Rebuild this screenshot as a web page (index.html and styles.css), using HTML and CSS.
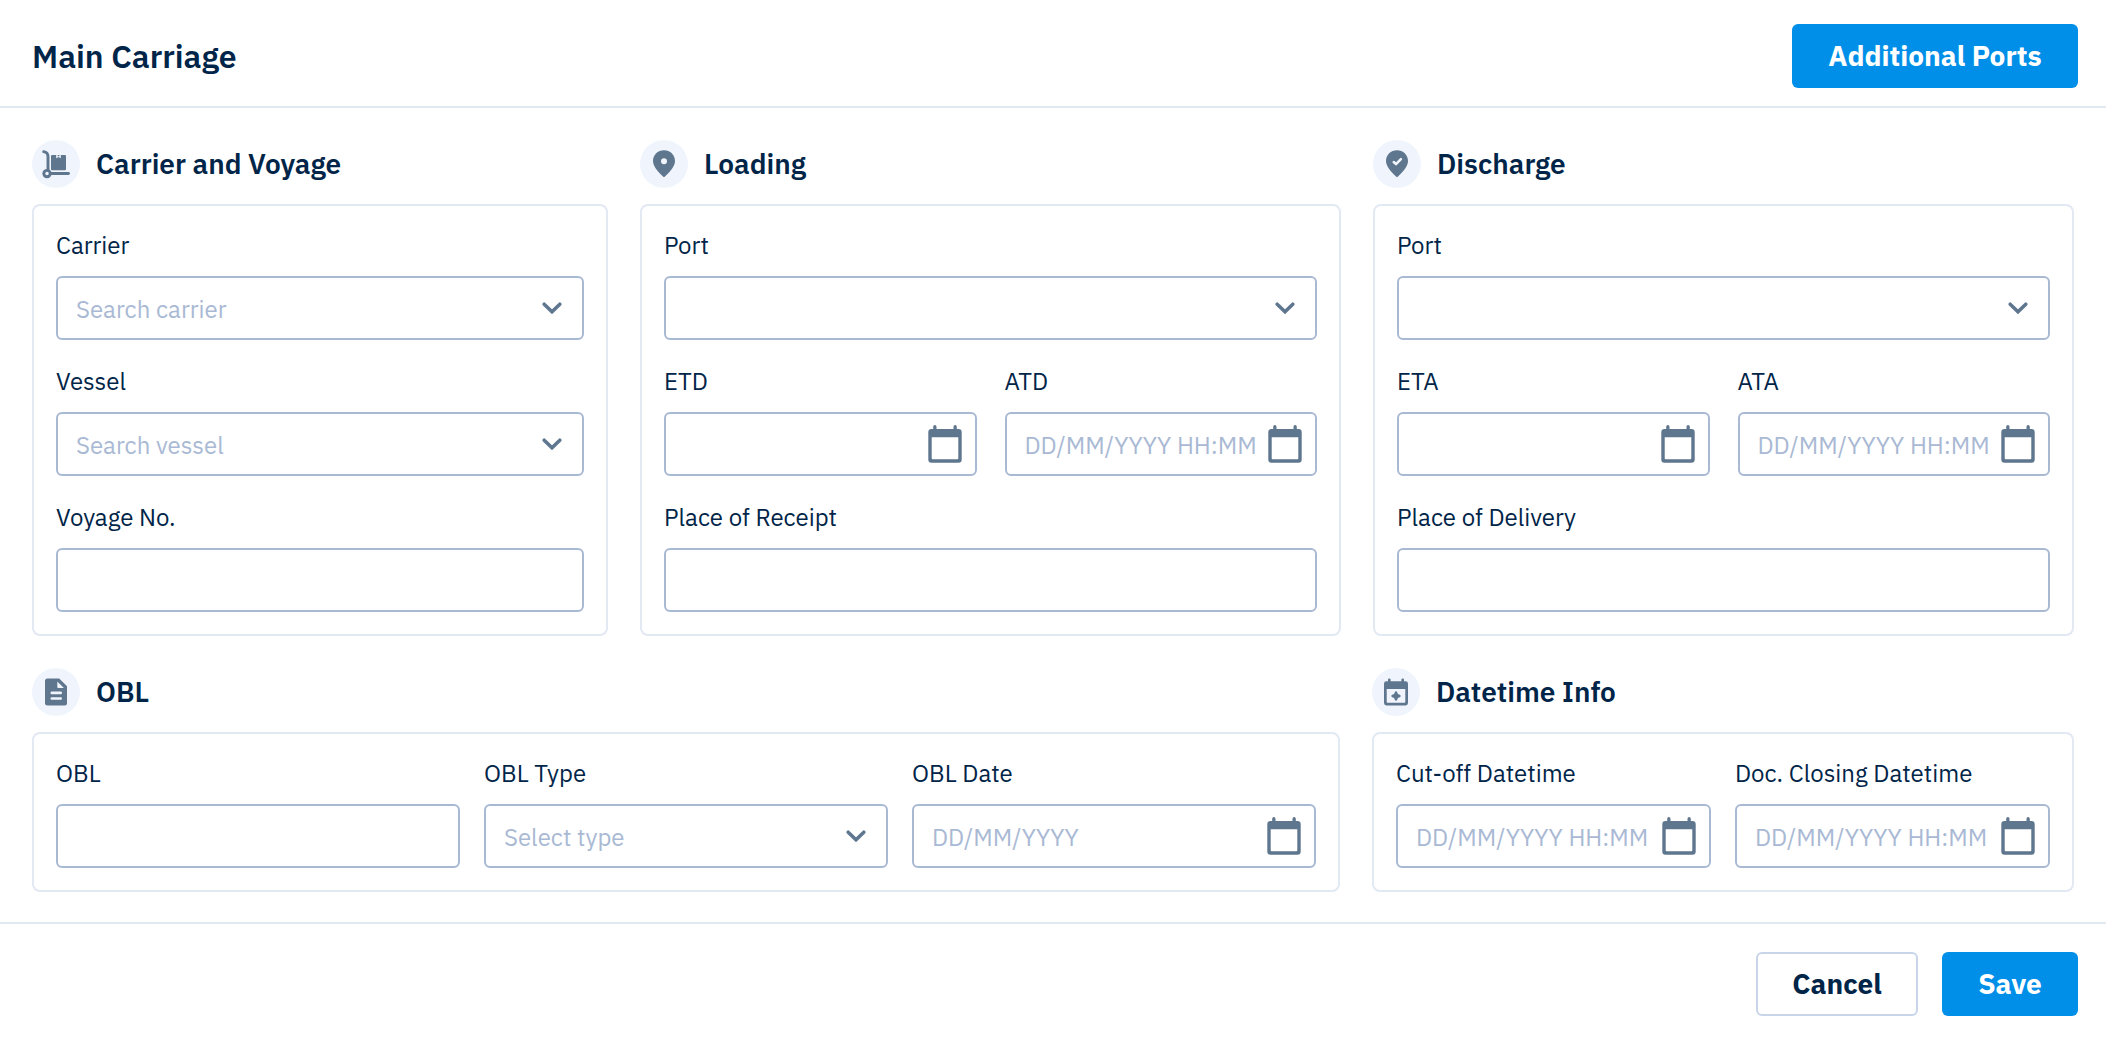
FILE: index.html
```
<!DOCTYPE html>
<html lang="en">
<head>
<meta charset="utf-8">
<title>Main Carriage</title>
<link rel="stylesheet" href="styles.css">
</head>
<body>
<svg class="sprite" aria-hidden="true">
  <symbol id="chevron" viewBox="0 0 20 12"><path d="M2.200 2.200l7.800 7.600 7.800-7.600" fill="none" stroke="currentColor" stroke-width="3.500" stroke-linecap="round" stroke-linejoin="miter"/></symbol>
  <symbol id="calendar" viewBox="0 0 34 38"><path fill="currentColor" fill-rule="evenodd" d="M5.200 1.700a1.650 1.650 0 0 1 3.300 0V4h17V1.700a1.650 1.650 0 0 1 3.300 0V4H30.500a3.200 3.200 0 0 1 3.200 3.200V34.500a3.200 3.200 0 0 1-3.200 3.200H3.500A3.200 3.200 0 0 1 .3 34.500V7.200A3.200 3.200 0 0 1 3.500 4H5.200zM3.700 12.300V33.200a1 1 0 0 0 1 1h24.600a1 1 0 0 0 1-1V12.300z"/></symbol>
</svg>

<div class="dialog">
  <header class="header">
    <h1 class="title">Main Carriage</h1>
    <button class="button button-primary button-ports">Additional Ports</button>
  </header>

  <main class="content">
    <div class="row row-top">
      <section>
        <div class="heading">
          <svg class="badge" viewBox="0 0 48 48"><circle class="disc" cx="24" cy="24" r="24"/><path class="line" d="M11.700 11.600c2.800.4 4.300 2.200 4.300 5V30"/><circle class="line" cx="15" cy="33.600" r="3.200"/><path class="line" d="M18.500 33.500h18"/><path class="glyph" d="M20 15h4.200v3.200l2.300-1.300 2.300 1.300V15H33a1 1 0 0 1 1 1v13.300a1 1 0 0 1-1 1H20a1 1 0 0 1-1-1V16a1 1 0 0 1 1-1zM25.600 15h1.800v1.300h-1.800z"/></svg>
          <h2 class="heading-text">Carrier and Voyage</h2>
        </div>
        <div class="card">
          <div class="field"><div class="label">Carrier</div><div class="input"><span class="placeholder">Search carrier</span><svg class="chevron"><use href="#chevron"/></svg></div></div>
          <div class="field"><div class="label">Vessel</div><div class="input"><span class="placeholder">Search vessel</span><svg class="chevron"><use href="#chevron"/></svg></div></div>
          <div class="field"><div class="label">Voyage No.</div><div class="input"></div></div>
        </div>
      </section>

      <section>
        <div class="heading">
          <svg class="badge" viewBox="0 0 48 48"><circle class="disc" cx="24" cy="24" r="24"/><path class="glyph" d="M24 10.300c-6.200 0-11 4.700-11 10.800 0 5 4.500 10.400 10.300 15.700a1 1 0 0 0 1.400 0C30.500 31.500 35 26.100 35 21.100c0-6.100-4.800-10.800-11-10.800z"/><circle class="disc" cx="24" cy="21.300" r="3"/></svg>
          <h2 class="heading-text">Loading</h2>
        </div>
        <div class="card">
          <div class="field"><div class="label">Port</div><div class="input"><svg class="chevron"><use href="#chevron"/></svg></div></div>
          <div class="pair">
            <div class="field"><div class="label">ETD</div><div class="input"><svg class="calendar"><use href="#calendar"/></svg></div></div>
            <div class="field"><div class="label">ATD</div><div class="input"><span class="placeholder">DD/MM/YYYY HH:MM</span><svg class="calendar"><use href="#calendar"/></svg></div></div>
          </div>
          <div class="field"><div class="label">Place of Receipt</div><div class="input"></div></div>
        </div>
      </section>

      <section>
        <div class="heading">
          <svg class="badge" viewBox="0 0 48 48"><circle class="disc" cx="24" cy="24" r="24"/><path class="glyph" d="M24 10.300c-6.200 0-11 4.700-11 10.800 0 5 4.500 10.400 10.300 15.700a1 1 0 0 0 1.400 0C30.500 31.500 35 26.100 35 21.100c0-6.100-4.800-10.800-11-10.800z"/><path class="check" d="M20.700 22l2.300 2.200 4.900-5"/></svg>
          <h2 class="heading-text">Discharge</h2>
        </div>
        <div class="card">
          <div class="field"><div class="label">Port</div><div class="input"><svg class="chevron"><use href="#chevron"/></svg></div></div>
          <div class="pair">
            <div class="field"><div class="label">ETA</div><div class="input"><svg class="calendar"><use href="#calendar"/></svg></div></div>
            <div class="field"><div class="label">ATA</div><div class="input"><span class="placeholder">DD/MM/YYYY HH:MM</span><svg class="calendar"><use href="#calendar"/></svg></div></div>
          </div>
          <div class="field"><div class="label">Place of Delivery</div><div class="input"></div></div>
        </div>
      </section>
    </div>

    <div class="row row-bottom">
      <section>
        <div class="heading">
          <svg class="badge" viewBox="0 0 48 48"><circle class="disc" cx="24" cy="24" r="24"/><path class="glyph" d="M15.500 10.400h11.700L35 18.200V35a2.500 2.500 0 0 1-2.500 2.500h-17A2.500 2.500 0 0 1 13 35V12.900a2.500 2.500 0 0 1 2.500-2.500z"/><path class="disc" d="M25.300 13.400v5.600a1 1 0 0 0 1 1h5.600z"/><rect class="disc" x="18.500" y="23.600" width="11.500" height="2.600" rx="1.300"/><rect class="disc" x="18.500" y="29.200" width="11.500" height="2.600" rx="1.300"/></svg>
          <h2 class="heading-text">OBL</h2>
        </div>
        <div class="card card-columns card-three">
          <div class="field"><div class="label">OBL</div><div class="input"></div></div>
          <div class="field"><div class="label">OBL Type</div><div class="input"><span class="placeholder">Select type</span><svg class="chevron"><use href="#chevron"/></svg></div></div>
          <div class="field"><div class="label">OBL Date</div><div class="input"><span class="placeholder">DD/MM/YYYY</span><svg class="calendar"><use href="#calendar"/></svg></div></div>
        </div>
      </section>

      <section>
        <div class="heading">
          <svg class="badge" viewBox="0 0 48 48"><circle class="disc" cx="24" cy="24" r="24"/><path class="glyph" fill-rule="evenodd" d="M16 11.800a1.300 1.300 0 0 1 2.600 0v1.500h10.800v-1.500a1.300 1.300 0 0 1 2.600 0v1.500h1.600a2.400 2.400 0 0 1 2.400 2.400v19.400a2.400 2.400 0 0 1-2.400 2.400H14.400A2.400 2.400 0 0 1 12 35.100V15.700a2.400 2.400 0 0 1 2.400-2.400H16zM14.700 21v13a.8.8 0 0 0 .8.8h17a.8.8 0 0 0 .8-.8V21z"/><path class="glyph" d="M24 23.200a1.300 1.300 0 0 1 1.200 1l.7 1.900 1.900.7a1.260 1.260 0 0 1 0 2.400l-1.900.7-.7 1.900a1.260 1.260 0 0 1-2.400 0l-.7-1.900-1.900-.7a1.260 1.260 0 0 1 0-2.400l1.900-.7.7-1.900a1.300 1.300 0 0 1 1.200-1z"/></svg>
          <h2 class="heading-text">Datetime Info</h2>
        </div>
        <div class="card card-columns card-two">
          <div class="field"><div class="label">Cut-off Datetime</div><div class="input"><span class="placeholder">DD/MM/YYYY HH:MM</span><svg class="calendar"><use href="#calendar"/></svg></div></div>
          <div class="field"><div class="label">Doc. Closing Datetime</div><div class="input"><span class="placeholder">DD/MM/YYYY HH:MM</span><svg class="calendar"><use href="#calendar"/></svg></div></div>
        </div>
      </section>
    </div>
  </main>

  <footer class="footer">
    <button class="button button-outline">Cancel</button>
    <button class="button button-primary button-save">Save</button>
  </footer>
</div>
</body>
</html>
```
FILE: styles.css
```
* { box-sizing: border-box; }

body {
  margin: 0;
  background: #fff;
  color: #012548;
  font-family: "IBM Plex Sans", Roboto, "Open Sans", sans-serif;
}

.sprite { display: none; }

.dialog {
  display: flex;
  flex-direction: column;
  height: 1040px;
}

.header {
  display: flex;
  align-items: flex-start;
  justify-content: space-between;
  height: 108px;
  padding: 24px 28px 0 32px;
  border-bottom: 2px solid #e2e9f3;
}

.title {
  margin: 0;
  font-size: 32px;
  font-weight: 600;
  line-height: 65px;
}

.content {
  display: flex;
  flex-direction: column;
  gap: 32px;
  height: 816px;
  padding: 32px;
  border-bottom: 2px solid #e2e9f3;
}

.row { display: grid; gap: 32px; }
.row-top { grid-template-columns: 576px 1fr 1fr; }
.row-bottom { grid-template-columns: 1308px 1fr; }

.heading {
  display: flex;
  align-items: center;
  gap: 16px;
  height: 48px;
  margin-bottom: 16px;
}

.heading-text {
  margin: 0;
  font-size: 28px;
  font-weight: 600;
  line-height: 48px;
}

.badge { width: 48px; height: 48px; flex: none; }
.disc { fill: #f0f5fd; }
.glyph { fill: #5f768f; }
.line { fill: none; stroke: #5f768f; stroke-width: 2.9; stroke-linecap: round; }
.check { fill: none; stroke: #f0f5fd; stroke-width: 2.5; stroke-linecap: round; stroke-linejoin: round; }

.card {
  display: flex;
  flex-direction: column;
  gap: 24px;
  padding: 22px;
  border: 2px solid #e2e9f3;
  border-radius: 8px;
}
.card-columns { display: grid; }
.card-three { grid-template-columns: repeat(3, 1fr); }
.card-two { grid-template-columns: repeat(2, 1fr); }

.pair {
  display: grid;
  grid-template-columns: 1fr 1fr;
  gap: 28px;
}

.field { min-width: 0; }

.label {
  height: 36px;
  margin-bottom: 12px;
  font-size: 24px;
  line-height: 35px;
  white-space: nowrap;
}

.input {
  display: flex;
  align-items: center;
  height: 64px;
  padding: 0 13px 0 18px;
  border: 2px solid #a9b8d3;
  border-radius: 6px;
}

.placeholder {
  padding-top: 2px;
  color: #a9b9d4;
  font-size: 24px;
  line-height: 36px;
  white-space: nowrap;
}

.chevron {
  width: 20px;
  height: 12px;
  margin-left: auto;
  margin-right: 7px;
  color: #5f768f;
}
.calendar {
  flex: none;
  width: 34px;
  height: 38px;
  margin-left: auto;
  color: #5f768f;
}

.footer {
  display: flex;
  justify-content: flex-end;
  gap: 24px;
  padding: 28px 28px 0 0;
}

.button {
  width: 162px;
  height: 64px;
  padding: 0;
  border: 0;
  border-radius: 6px;
  font: 700 28px/64px "IBM Plex Sans", Roboto, "Open Sans", sans-serif;
}
.button-primary { background: #008fe8; color: #fff; }
.button-ports { width: 286px; }
.button-save { width: 136px; }
.button-outline {
  border: 2px solid #c8d5e9;
  background: #fff;
  color: #012548;
  line-height: 60px;
}
```
